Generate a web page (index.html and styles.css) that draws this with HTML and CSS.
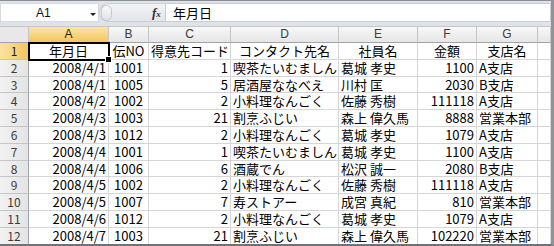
FILE: index.html
```html
<!DOCTYPE html>
<html lang="ja">
<head>
  <meta charset="UTF-8">
  <title>Sheet1</title>
  <link rel="stylesheet" href="styles.css">
</head>
<body>
  <div class="excel">
    <div class="formula-bar">
      <div class="name-box"><span class="name">A1</span><span class="arrow"></span></div>
      <div class="grip"><span class="knob"></span><span class="fx">f<small>x</small></span></div>
      <div class="formula">年月日</div>
    </div>

    <div class="sheet">
      <div class="h corner"></div>
      <div class="h sel-col">A</div>
      <div class="h">B</div>
      <div class="h">C</div>
      <div class="h">D</div>
      <div class="h">E</div>
      <div class="h">F</div>
      <div class="h">G</div>
      <div class="h"></div>

      <div class="rh sel-row">1</div>
      <div class="c mid active">年月日</div>
      <div class="c mid">伝NO</div>
      <div class="c mid">得意先コード</div>
      <div class="c mid">コンタクト先名</div>
      <div class="c mid">社員名</div>
      <div class="c mid">金額</div>
      <div class="c mid">支店名</div>
      <div class="c"></div>

      <div class="rh">2</div>
      <div class="c num">2008/4/1</div><div class="c mid">1001</div><div class="c num">1</div>
      <div class="c">喫茶たいむましん</div><div class="c">葛城 孝史</div><div class="c num">1100</div><div class="c">A支店</div><div class="c"></div>

      <div class="rh">3</div>
      <div class="c num">2008/4/1</div><div class="c mid">1005</div><div class="c num">5</div>
      <div class="c">居酒屋ななべえ</div><div class="c">川村 匡</div><div class="c num">2030</div><div class="c">B支店</div><div class="c"></div>

      <div class="rh">4</div>
      <div class="c num">2008/4/2</div><div class="c mid">1002</div><div class="c num">2</div>
      <div class="c">小料理なんごく</div><div class="c">佐藤 秀樹</div><div class="c num">111118</div><div class="c">A支店</div><div class="c"></div>

      <div class="rh">5</div>
      <div class="c num">2008/4/3</div><div class="c mid">1003</div><div class="c num">21</div>
      <div class="c">割烹ふじい</div><div class="c">森上 偉久馬</div><div class="c num">8888</div><div class="c">営業本部</div><div class="c"></div>

      <div class="rh">6</div>
      <div class="c num">2008/4/3</div><div class="c mid">1012</div><div class="c num">2</div>
      <div class="c">小料理なんごく</div><div class="c">葛城 孝史</div><div class="c num">1079</div><div class="c">A支店</div><div class="c"></div>

      <div class="rh">7</div>
      <div class="c num">2008/4/4</div><div class="c mid">1001</div><div class="c num">1</div>
      <div class="c">喫茶たいむましん</div><div class="c">葛城 孝史</div><div class="c num">1100</div><div class="c">A支店</div><div class="c"></div>

      <div class="rh">8</div>
      <div class="c num">2008/4/4</div><div class="c mid">1006</div><div class="c num">6</div>
      <div class="c">酒蔵でん</div><div class="c">松沢 誠一</div><div class="c num">2080</div><div class="c">B支店</div><div class="c"></div>

      <div class="rh">9</div>
      <div class="c num">2008/4/5</div><div class="c mid">1002</div><div class="c num">2</div>
      <div class="c">小料理なんごく</div><div class="c">佐藤 秀樹</div><div class="c num">111118</div><div class="c">A支店</div><div class="c"></div>

      <div class="rh">10</div>
      <div class="c num">2008/4/5</div><div class="c mid">1007</div><div class="c num">7</div>
      <div class="c">寿ストアー</div><div class="c">成宮 真紀</div><div class="c num">810</div><div class="c">営業本部</div><div class="c"></div>

      <div class="rh">11</div>
      <div class="c num">2008/4/6</div><div class="c mid">1012</div><div class="c num">2</div>
      <div class="c">小料理なんごく</div><div class="c">葛城 孝史</div><div class="c num">1079</div><div class="c">A支店</div><div class="c"></div>

      <div class="rh">12</div>
      <div class="c num">2008/4/7</div><div class="c mid">1003</div><div class="c num">21</div>
      <div class="c">割烹ふじい</div><div class="c">森上 偉久馬</div><div class="c num">102220</div><div class="c">営業本部</div><div class="c"></div>
    </div>
  </div>
</body>
</html>
```

FILE: styles.css
```css
* { box-sizing: border-box; }
body { margin: 0; background: #fff; font-family: "Noto Sans CJK JP", "Noto Sans", sans-serif; color: #000; }
.excel { width: 554px; height: 246px; overflow: hidden; border-right: 3px solid #8e949c; border-bottom: 2px solid #6e737a; }

/* formula bar */
.formula-bar {
  display: flex;
  height: 27px;
  padding: 2px 0 4px;
  border-top: 1px solid #8a8f96;
  background: #dfe3e8;
  border-bottom: 1px solid #c3c8ce;
}
.name-box { width: 99px; display: flex; align-items: center; background: #fff; border: 1px solid #d6dae0; position: relative; }
.name { font-family: "Liberation Sans", sans-serif; font-size: 12px; margin-left: 35px; color: #111; }
.arrow { position: absolute; left: 89px; top: 9px; border-left: 3px solid transparent; border-right: 3px solid transparent; border-top: 3px solid #222; }
.grip { width: 66px; display: flex; align-items: center; background: linear-gradient(#f2f3f5, #e3e6ea); border-radius: 10px 0 0 10px; border: 1px solid #c9cdd3; border-right: 0; }
.knob { width: 11px; height: 16px; margin-left: 1px; border-radius: 8px; border: 1px solid #c4c8ce; background: linear-gradient(#fafafa, #dfe2e6); }
.fx { margin-left: 40px; font-family: "Liberation Serif", serif; font-style: italic; font-weight: bold; font-size: 13px; color: #333; }
.fx small { font-size: 9px; }
.formula { flex: 1; background: #fff; border: 1px solid #c9cdd3; padding-left: 7px; font-size: 13px; line-height: 18px; }

/* sheet grid */
.sheet {
  display: grid;
  grid-template-columns: 29px 80px 40px 82px 108px 79px 59px 61px 13px;
  grid-template-rows: 16px repeat(12, 16.8px);
  font-size: 13px;
}
.h {
  background: linear-gradient(#f8f8f8, #e6e6e6);
  border-right: 1px solid #c5c5c5;
  border-bottom: 1px solid #9fa4aa;
  text-align: center;
  font-family: "Liberation Sans", sans-serif;
  font-size: 12px;
  line-height: 15px;
  color: #3b3b3b;
}
.corner { background: #e8e8e8; }
.rh {
  background: linear-gradient(90deg, #f2f2f2, #e4e4e4);
  border-right: 1px solid #9fa4aa;
  border-bottom: 1px solid #c5c5c5;
  text-align: center;
  font-size: 12px;
  line-height: 16px;
  color: #3b3b3b;
}
.sel-col { background: linear-gradient(#fae5a8, #f4c65c); border-bottom-color: #e29a35; color: #222; }
.sel-row { background: linear-gradient(90deg, #fae3a0, #f3c65f); border-right-color: #e29a35; color: #222; }
.c {
  border-right: 1px solid #d6d6d6;
  border-bottom: 1px solid #d6d6d6;
  padding: 0 2px;
  white-space: nowrap;
  line-height: 16px;
}
.num { text-align: right; }
.mid { text-align: center; }
.active { position: relative; outline: 2px solid #000; outline-offset: -1px; }
.active::after {
  content: "";
  position: absolute;
  right: -4px;
  bottom: -4px;
  width: 5px;
  height: 5px;
  background: #000;
  border: 1px solid #fff;
}
```
